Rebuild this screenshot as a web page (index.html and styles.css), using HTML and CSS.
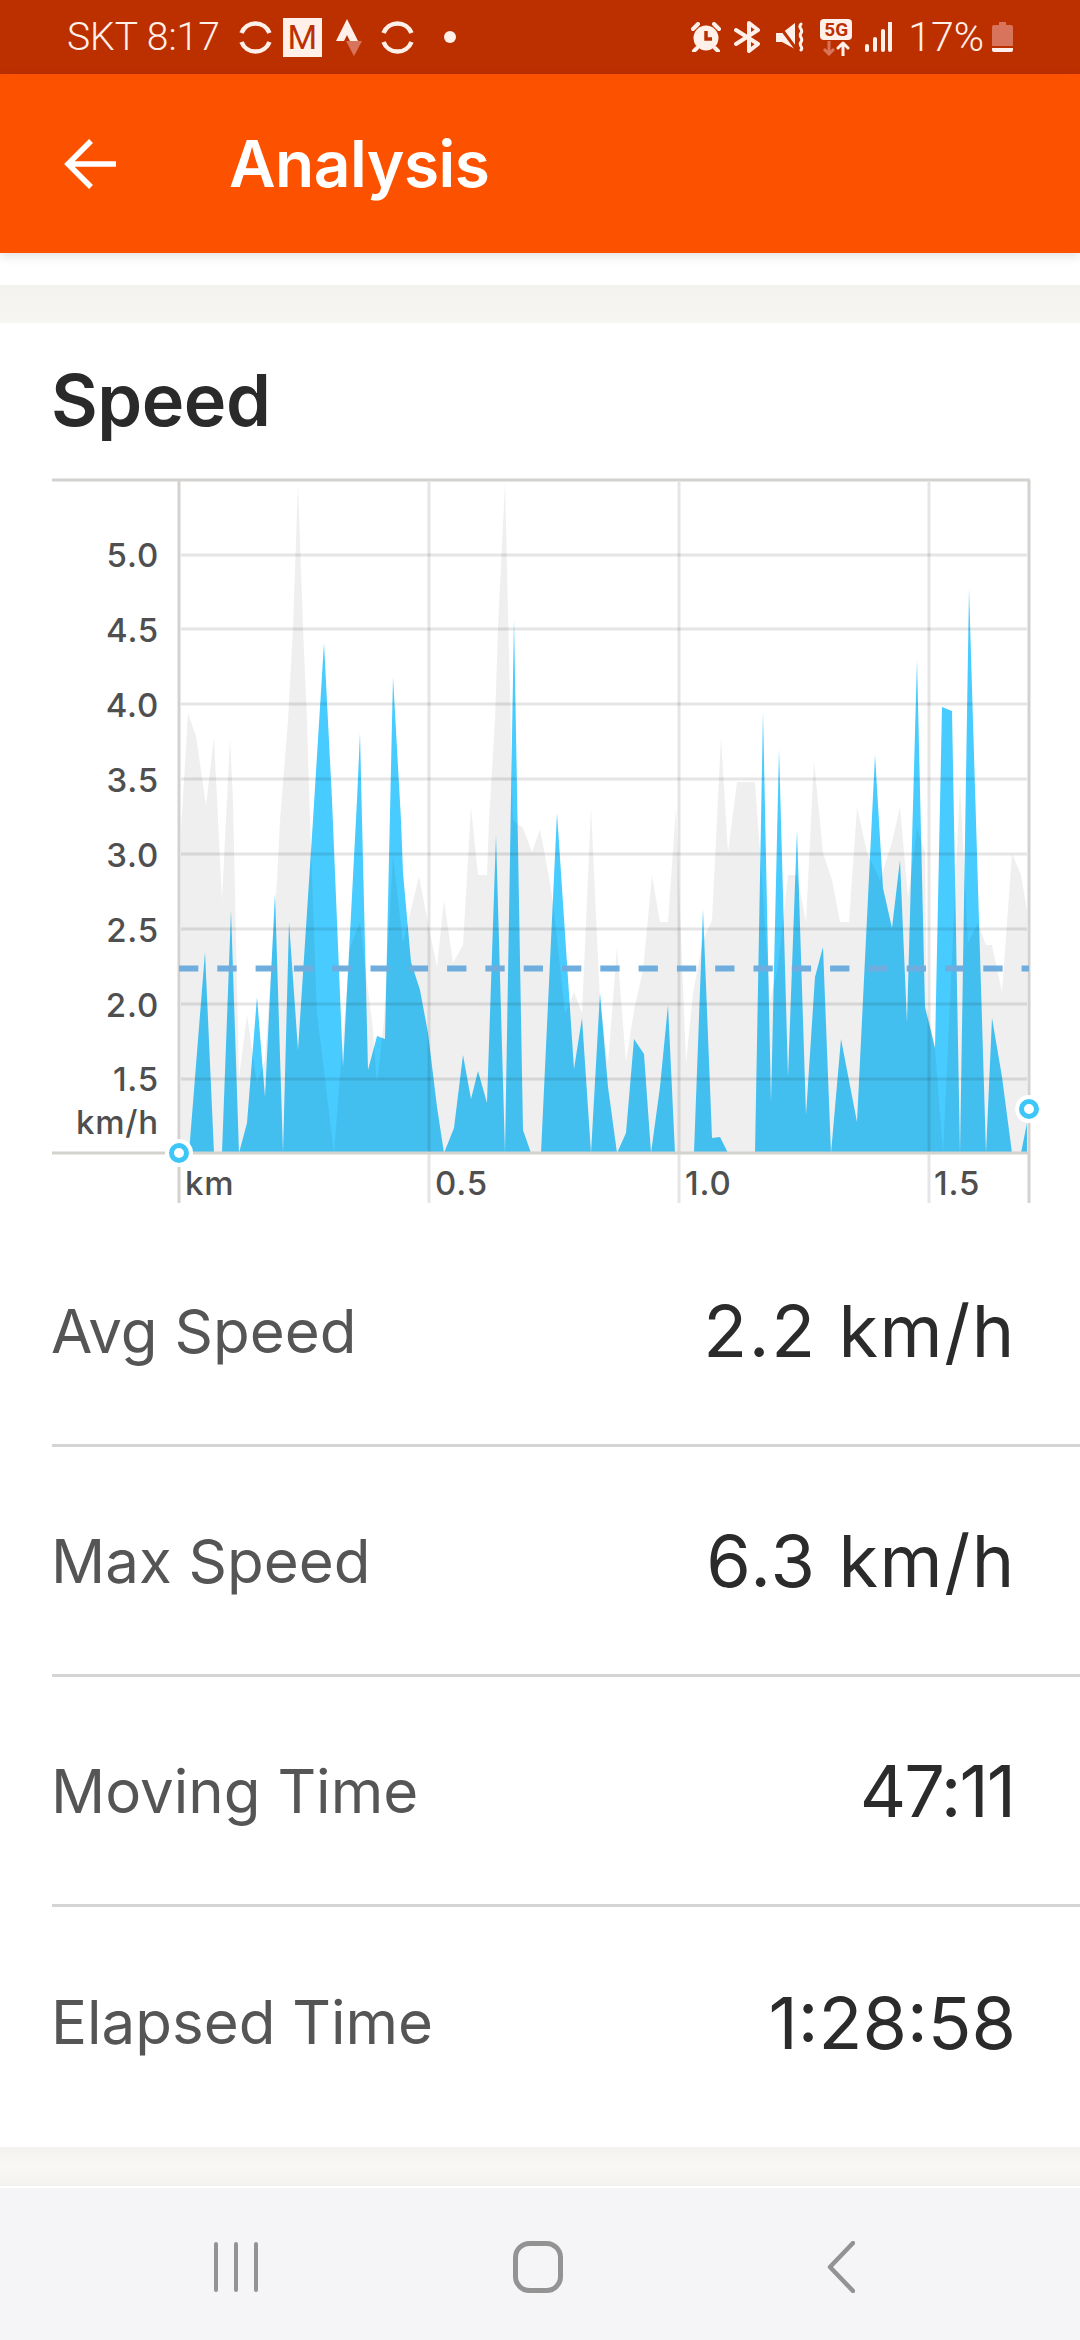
FILE: index.html
```html
<!DOCTYPE html>
<html lang="en">
<head>
  <meta charset="UTF-8" />
  <meta name="viewport" content="width=device-width, initial-scale=1.0"/>
  <title>Analysis</title>
  <link rel="stylesheet" href="styles.css">
</head>
<body>
  <div class="status-bar">
    <div class="status-left">
      <span class="status-text">SKT 8:17</span>
      <svg class="sync" viewBox="0 0 33 33"><path d="M2.500 12A15 15 0 0 1 30.500 12M2.500 21A15 15 0 0 0 30.500 21" /></svg>
      <span class="gmail">M</span>
      <svg class="strava" viewBox="0 0 26 37"><path class="strong" d="M0 22 11 0l11 22h-8l-3-6-3 6z"/><path class="faint" d="M10 22h16l-8 15z"/></svg>
      <svg class="sync" viewBox="0 0 33 33"><path d="M2.500 12A15 15 0 0 1 30.500 12M2.500 21A15 15 0 0 0 30.500 21" /></svg>
      <span class="status-dot"></span>
    </div>
    <div class="status-right">
      <svg class="ic-alarm" viewBox="0 0 30 30"><circle cx="15" cy="16" r="12.500" class="strong"/><path d="M15 9v8h6" class="cut"/><path d="M2 7l5-5M28 7l-5-5M6 26l-3 3M24 26l3 3" class="line"/></svg>
      <svg class="ic-bt" viewBox="0 0 28 32"><path d="M2 9l22 14-9 7V2l9 7L2 23" class="line"/></svg>
      <svg class="ic-mute" viewBox="0 0 30 30"><path class="strong" d="M0 11h6l13-10v26L6 20H0z"/><path class="gap" d="M1 1l20 27"/><path class="line thin" d="M25 2c-4 4 3 5 0 9s3 5 0 9 3 5 0 8"/></svg>
      <span class="ic-5g">
        <span class="badge-5g">5G</span>
        <svg viewBox="0 0 32 15"><path class="faint-line" d="M9 0v13M4 8l5 5 5-5"/><path class="line thin" d="M23 15V2M18 7l5-5 5 5"/></svg>
      </span>
      <svg class="ic-signal" viewBox="0 0 27 30"><path class="line" d="M2 24v4M10 17v11M18 9v19M25 1v27"/></svg>
      <span class="status-text pct">17%</span>
      <svg class="ic-batt" viewBox="0 0 21 30"><path class="faint" d="M7 0h7v3h5q2 0 2 2v19H0V5q0-2 2-2h5z"/><path class="strong" d="M0 26h21v2q0 2-2 2H2q-2 0-2-2z"/></svg>
    </div>
  </div>

  <header class="app-bar">
    <svg class="back" viewBox="0 0 52 52"><path d="M52 26H4M27 3 4 26l23 23"/></svg>
    <h1>Analysis</h1>
  </header>

  <div class="top-gap"></div>
  <div class="band"></div>

  <main class="card">
    <h2>Speed</h2>

    <svg class="chart" viewBox="0 0 1080 752" id="chart">
      <!-- y = page y - 465 -->
      <g transform="translate(0 -465)">
        <polygon class="blue" points="189,1153 205,952 214,1153 222,1153 231,910 239,1153 247,1123 257,997 265,1097 275,893 283,1153 289,922 298,1050 313,820 324,643 332,800 343,1067 357,800 360,733 362,820 368,1070 377,1036 385,1039 393,677 401,820 403,873 411,962 420,990 428,1033 437,1107 444,1153 454,1128 463,1055 471,1099 478,1071 487,1103 496,835 505,1153 514,619 523,1130 531,1153 541,1153 557,813 574,1069 582,1018 591,1153 600,993 608,1087 617,1153 626,1133 634,1039 644,1054 651,1153 660,1087 668,1005 675,1153 694,1153 703,909 712,1138 720,1137 728,1153 755,1153 763,712 771,1103 779,749 788,1077 797,830 806,1115 815,977 823,947 831,1153 841,1039 857,1122 875,755 883,888 892,928 900,860 907,1023 917,660 925,1007 935,1048 942,707 952,711 960,1153 969,589 986,1153 992,1018 1002,1077 1012,1153 1021,1153 1027,1123 1027,1153"/>
        <polygon class="gray" points="181,1153 181,830 188,713 196,736 206,805 214,737 222,900 230,738 233,800 239,1077 247,1015 257,1083 265,1060 277,880 280,820 288,720 293,627 298,482 303,627 307,720 310,820 317,1013 334,1153 350,947 360,922 368,990 373,1030 377,1083 384,1020 393,855 403,943 419,876 428,923 437,967 444,900 453,963 463,945 471,807 478,875 487,875 489,820 495,720 498,627 505,482 510,693 513,820 523,828 532,852 540,829 549,877 554,910 565,1013 574,992 582,1013 591,807 600,1000 608,1063 617,947 626,1062 634,1010 643,970 652,875 660,922 668,922 676,807 686,1063 693,993 703,940 712,920 721,737 728,852 737,782 755,782 762,880 770,1000 778,967 788,875 797,875 806,922 814,760 823,853 832,880 840,922 849,922 857,807 867,852 880,880 892,842 900,807 908,897 917,828 925,852 927,1007 935,1048 943,1153 960,782 968,943 978,923 986,945 992,945 1002,992 1012,853 1021,875 1027,910 1027,1153"/>

        <g class="grid-h">
          <line x1="181" x2="1027" y1="555" y2="555"/>
          <line x1="181" x2="1027" y1="629" y2="629"/>
          <line x1="181" x2="1027" y1="704" y2="704"/>
          <line x1="181" x2="1027" y1="779" y2="779"/>
          <line x1="181" x2="1027" y1="854" y2="854"/>
          <line x1="181" x2="1027" y1="929" y2="929"/>
          <line x1="181" x2="1027" y1="1004" y2="1004"/>
          <line x1="181" x2="1027" y1="1079" y2="1079"/>
        </g>
        <g class="grid-v">
          <line x1="429" x2="429" y1="482" y2="1203"/>
          <line x1="679" x2="679" y1="482" y2="1203"/>
          <line x1="929" x2="929" y1="482" y2="1203"/>
        </g>
        <g class="axis">
          <line x1="52" x2="1030" y1="480" y2="480"/>
          <line x1="179" x2="179" y1="480" y2="1203"/>
          <line x1="1029" x2="1029" y1="480" y2="1203"/>
          <line x1="52" x2="1029" y1="1153" y2="1153"/>
        </g>
        <line class="avg" x1="179" x2="1029" y1="968.500" y2="968.500"/>

        <circle class="pin-halo" cx="179" cy="1153" r="14"/>
        <circle class="pin" cx="179" cy="1153" r="7.500"/>
        <circle class="pin-halo" cx="1029" cy="1109" r="14"/>
        <circle class="pin" cx="1029" cy="1109" r="7.500"/>

        <g class="tick">
          <text x="159" y="567">5.0</text>
          <text x="159" y="642">4.5</text>
          <text x="159" y="717">4.0</text>
          <text x="159" y="792">3.5</text>
          <text x="159" y="867">3.0</text>
          <text x="159" y="942">2.5</text>
          <text x="159" y="1017">2.0</text>
          <text x="159" y="1091">1.5</text>
          <text x="159" y="1134">km/h</text>
        </g>
        <g class="tick start">
          <text x="185" y="1195">km</text>
          <text x="435" y="1195">0.5</text>
          <text x="685" y="1195">1.0</text>
          <text x="934" y="1195">1.5</text>
        </g>
      </g>
    </svg>

    <ul class="stats">
      <li class="stat"><span class="stat-label">Avg Speed</span><span class="stat-value wide">2.2 km/h</span></li>
      <li class="stat"><span class="stat-label">Max Speed</span><span class="stat-value wide">6.3 km/h</span></li>
      <li class="stat"><span class="stat-label">Moving Time</span><span class="stat-value tight">47:11</span></li>
      <li class="stat"><span class="stat-label">Elapsed Time</span><span class="stat-value">1:28:58</span></li>
    </ul>
  </main>

  <div class="band band-bottom"></div>

  <nav class="nav-bar">
    <svg class="nav-recent" viewBox="0 0 44 50"><path d="M2 2v46M22 2v46M42 2v46"/></svg>
    <svg class="nav-home" viewBox="0 0 50 52"><rect x="2.500" y="2.500" width="45" height="47" rx="14"/></svg>
    <svg class="nav-back" viewBox="0 0 28 52"><path d="M26 2 3 26l23 24"/></svg>
  </nav>
</body>
</html>
```

FILE: styles.css
```css
* { box-sizing: border-box; }
html, body { margin: 0; padding: 0; }
body {
  width: 1080px;
  height: 2340px;
  overflow: hidden;
  background: #fff;
  font-family: Inter, "Liberation Sans", sans-serif;
  display: flex;
  flex-direction: column;
}

/* status bar */
.status-bar {
  height: 74px;
  flex: none;
  background: #bc3000;
  color: #fff0ea;
  display: flex;
  justify-content: space-between;
  padding: 0 67px;
}
.status-left, .status-right {
  display: flex;
  align-items: center;
}
.status-text {
  font-family: Roboto, sans-serif;
  font-size: 39px;
  font-weight: 300;
  line-height: 1;
  white-space: nowrap;
}
.status-left .status-text { margin-right: 19px; }
.status-left svg.sync { width: 33px; height: 33px; fill: none; stroke: #fff0ea; stroke-width: 4.500; }
.gmail {
  width: 39px;
  height: 39px;
  margin: 0 14px 0 11px;
  background: #fff0ea;
  color: #bc3000;
  font: 400 34px/39px Roboto, sans-serif;
  text-align: center;
}
.strava { width: 26px; height: 37px; margin-right: 19px; }
.strong { fill: #fff0ea; }
.faint { fill: #d8745c; }
.status-dot {
  width: 12px;
  height: 12px;
  margin-left: 30px;
  border-radius: 50%;
  background: #fff0ea;
}
.line { fill: none; stroke: #fff0ea; stroke-width: 4; stroke-linecap: round; stroke-linejoin: round; }
.line.thin { stroke-width: 3; }
.faint-line { fill: none; stroke: #d8745c; stroke-width: 3; }
.cut { fill: none; stroke: #bc3000; stroke-width: 3.500; }
.gap { fill: none; stroke: #bc3000; stroke-width: 3; }
.ic-alarm { width: 30px; height: 30px; margin-right: 13px; }
.ic-bt { width: 28px; height: 32px; margin-right: 14px; }
.ic-mute { width: 30px; height: 30px; margin-right: 14px; }
.ic-5g { width: 32px; display: flex; flex-direction: column; margin-right: 13px; }
.badge-5g {
  height: 21px;
  background: #fff0ea;
  border-radius: 4px;
  color: #bc3000;
  font: 700 19px/21px Roboto, sans-serif;
  text-align: center;
}
.ic-5g svg { width: 32px; height: 15px; margin-top: 1px; }
.ic-signal { width: 27px; height: 30px; margin-right: 16px; }
.pct { margin-right: 8px; font-size: 41px; }
.ic-batt { width: 21px; height: 30px; }

/* app bar */
.app-bar {
  height: 179px;
  flex: none;
  background: #fc5200;
  display: flex;
  align-items: center;
  position: relative;
  padding-left: 64px;
  box-shadow: 0 3px 10px rgba(0, 0, 0, .12);
}
.back { width: 52px; height: 52px; fill: none; stroke: #fff; stroke-width: 5.500; margin-right: 113px; }
.app-bar h1 {
  margin: 0;
  color: #fff;
  font-size: 64px;
  font-weight: 600;
  letter-spacing: -.5px;
}

.top-gap { height: 32px; flex: none; }
.band {
  height: 38px;
  flex: none;
  background: linear-gradient(#f3f2ee, #f7f6f2);
}
.band-bottom {
  height: 39px;
  background: linear-gradient(#f3f2ee, #f9f8f4 50%, #f3f2ee);
}

/* card */
.card { height: 1824px; flex: none; background: #fff; }
.card h2 {
  margin: 0;
  padding: 37px 0 0 51px;
  height: 142px;
  color: #2a2a2a;
  font-size: 72px;
  font-weight: 600;
  line-height: 80px;
  letter-spacing: -.5px;
}
.chart { display: block; width: 1080px; height: 752px; }

.blue { fill: #48ccff; }
.gray { fill: rgba(0, 0, 0, .063); }
.grid-h line, .grid-v line { stroke: rgba(0, 0, 0, .1); stroke-width: 3; }
.axis line { stroke: #d3d2ce; stroke-width: 3; }
.avg { stroke: #6fadde; stroke-width: 6; stroke-dasharray: 19.300 19; }
.pin-halo { fill: #fff; }
.pin { fill: #fff; stroke: #3dc6f8; stroke-width: 5; }
.tick text {
  fill: #4f4f4f;
  font-family: Inter, sans-serif;
  font-size: 33px;
  font-weight: 500;
  letter-spacing: .8px;
  text-anchor: end;
}
.tick.start text { text-anchor: start; }

/* stats */
.stats { list-style: none; margin: 0; padding: 0 0 0 52px; }
.stat {
  height: 230px;
  display: flex;
  justify-content: space-between;
  align-items: center;
  padding-right: 64px;
  border-bottom: 3px solid #d4d4d4;
}
.stat:last-child { border-bottom: none; }
.stat-label { color: #555; font-size: 60px; margin-left: -1px; }
.stat-value { color: #2b2b2b; font-size: 72px; }
.stat-value.wide { letter-spacing: 1.600px; }
.stat-value.tight { letter-spacing: -2px; margin-right: 2px; }

/* nav bar */
.nav-bar {
  margin-top: 2px;
  flex: 1;
  background: #f5f5f7;
  display: flex;
  align-items: center;
  padding: 6px 0 0 214px;
}
.nav-bar svg { fill: none; stroke: #939393; stroke-linecap: round; stroke-linejoin: round; }
.nav-recent { width: 44px; height: 50px; stroke-width: 4; margin-right: 255px; }
.nav-home { width: 50px; height: 52px; stroke-width: 5; margin-right: 264px; }
.nav-back { width: 28px; height: 52px; stroke-width: 4.500; }
```
